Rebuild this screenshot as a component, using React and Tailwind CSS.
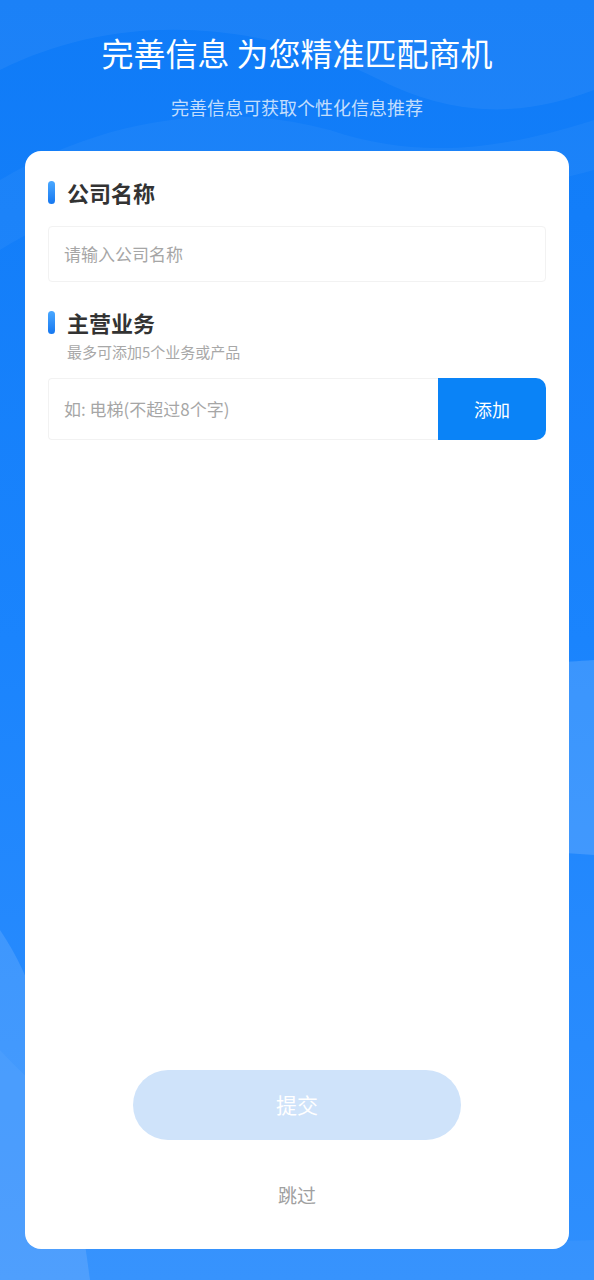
import React from "react";

const font = { fontFamily: '"Noto Sans CJK SC", "Noto Sans", sans-serif' };

const SectionTitle = ({ children }) => (
  <div className="flex h-[24px] items-center">
    <span className="h-[23px] w-[7px] rounded-full bg-gradient-to-b from-[#4aa8ff] to-[#1477f0]" />
    <span className="ml-[12px] text-[22px] font-bold leading-[24px] text-[#333333]">
      {children}
    </span>
  </div>
);

export default function App() {
  return (
    <div
      className="relative min-h-[1280px] w-full overflow-hidden bg-gradient-to-b from-[#0f7bf7] via-[#1a84fd] to-[#2f8ffd]"
      style={font}
    >
      {/* background waves */}
      <svg
        className="pointer-events-none absolute inset-0 h-full w-full"
        viewBox="0 0 594 1280"
        preserveAspectRatio="none"
      >
        <path d="M0 70 C120 10 260 20 380 80 C470 125 540 110 594 90 L594 0 L0 0 Z" fill="#ffffff" opacity="0.05" />
        <path d="M0 250 C80 200 200 160 320 190 C420 215 520 190 594 170 L594 120 C500 150 420 160 330 130 C220 100 100 120 0 180 Z" fill="#ffffff" opacity="0.04" />
        <path d="M594 660 C560 662 540 664 520 668 L520 850 C545 852 570 853 594 855 Z" fill="#ffffff" opacity="0.14" />
        <path d="M0 930 C40 990 60 1060 90 1280 L0 1280 Z" fill="#ffffff" opacity="0.12" />
        <path d="M0 1050 C120 1180 300 1250 594 1240 L594 1280 L0 1280 Z" fill="#ffffff" opacity="0.04" />
      </svg>

      <div className="relative flex flex-col items-center">
        <h1 className="mt-[30px] text-[32px] font-normal leading-[44px] text-white">
          完善信息 为您精准匹配商机
        </h1>
        <p className="mt-[23px] text-[18px] leading-[20px] text-white/75">
          完善信息可获取个性化信息推荐
        </p>
      </div>

      <div className="relative mx-[25px] mt-[34px] flex h-[1098px] flex-col rounded-[16px] bg-white px-[23px] pt-[29px] pb-[42px]">
        <SectionTitle>公司名称</SectionTitle>
        <div className="mt-[22px] flex h-[56px] items-center rounded-[4px] border border-[#f2f2f2] px-[15px]">
          <span className="text-[17px] text-[#a6a6a6]">请输入公司名称</span>
        </div>

        <div className="mt-[28px]">
          <SectionTitle>主营业务</SectionTitle>
        </div>
        <p className="mt-[8px] ml-[19px] text-[15px] leading-[20px] text-[#a8a8a8]">
          最多可添加5个业务或产品
        </p>
        <div className="mt-[16px] flex h-[62px] items-stretch">
          <div className="flex flex-1 items-center rounded-l-[4px] border border-r-0 border-[#f2f2f2] px-[15px]">
            <span className="text-[17px] text-[#a6a6a6]">如: 电梯(不超过8个字)</span>
          </div>
          <button className="flex w-[108px] items-center justify-center rounded-r-[10px] bg-[#0a83f7] text-[18px] text-white">
            添加
          </button>
        </div>

        <div className="flex-1" />

        <button className="mx-auto flex h-[70px] w-[328px] items-center justify-center rounded-full bg-[#cfe3fa] text-[21px] text-white">
          提交
        </button>
        <p className="mt-[43px] text-center text-[19px] leading-[24px] text-[#a0a0a0]">
          跳过
        </p>
      </div>
    </div>
  );
}
